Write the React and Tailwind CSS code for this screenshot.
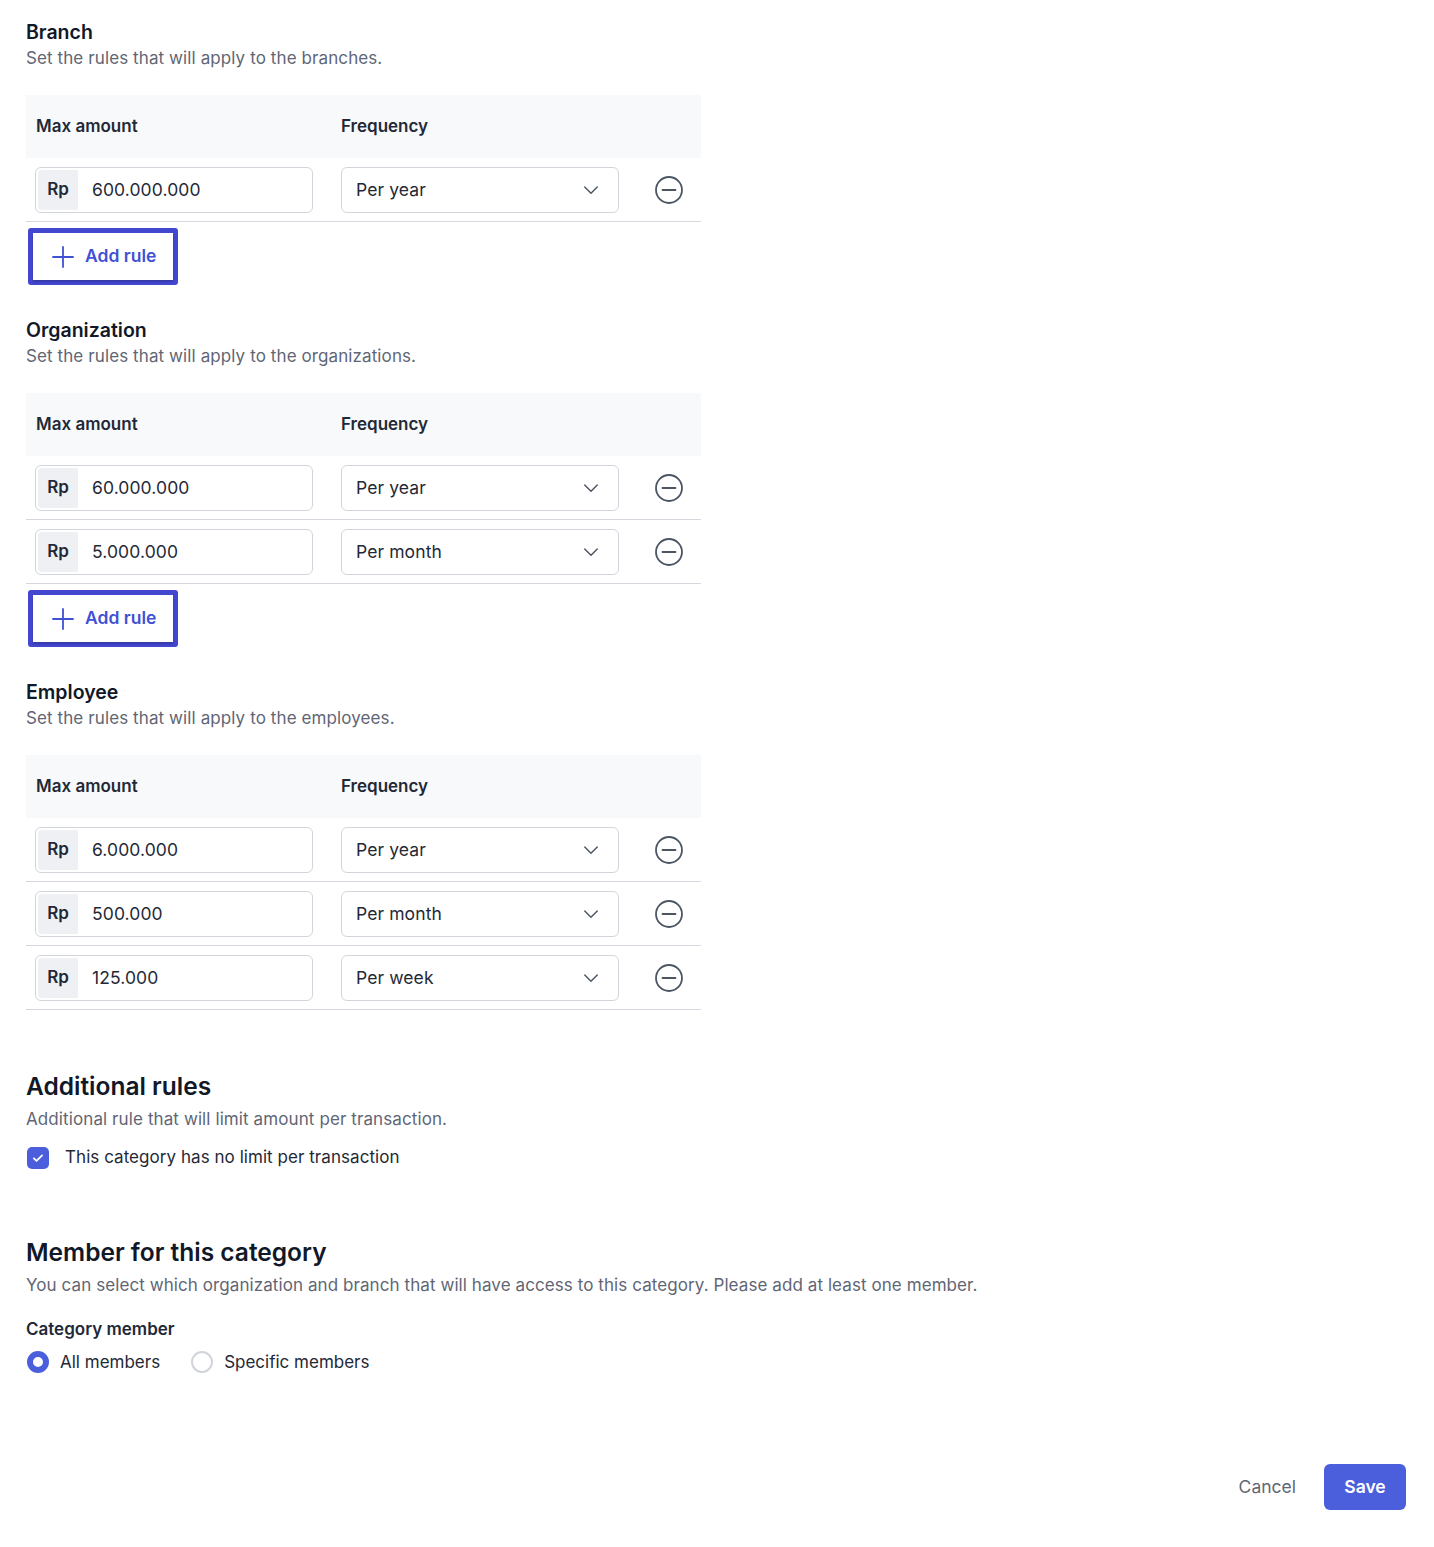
import React from 'react';

const sections = [
  {
    title: 'Branch',
    desc: 'Set the rules that will apply to the branches.',
    rows: [{ amount: '600.000.000', freq: 'Per year' }],
    addRule: true,
  },
  {
    title: 'Organization',
    desc: 'Set the rules that will apply to the organizations.',
    rows: [
      { amount: '60.000.000', freq: 'Per year' },
      { amount: '5.000.000', freq: 'Per month' },
    ],
    addRule: true,
  },
  {
    title: 'Employee',
    desc: 'Set the rules that will apply to the employees.',
    rows: [
      { amount: '6.000.000', freq: 'Per year' },
      { amount: '500.000', freq: 'Per month' },
      { amount: '125.000', freq: 'Per week' },
    ],
    addRule: false,
  },
];

const ChevronDown = () => (
  <svg width="20" height="20" viewBox="0 0 24 24" fill="none" stroke="#4b5563" strokeWidth="1.7" strokeLinecap="round" strokeLinejoin="round">
    <path d="M4.5 8.5l7.5 7.5 7.5-7.5" />
  </svg>
);

const MinusCircle = () => (
  <svg width="30" height="30" viewBox="0 0 30 30" fill="none" stroke="#4b5563" strokeWidth="1.8" strokeLinecap="round">
    <circle cx="15" cy="15" r="13" />
    <path d="M8.5 15h13" />
  </svg>
);

const PlusIcon = () => (
  <svg width="24" height="24" viewBox="0 0 24 24" fill="none" stroke="#3f51d4" strokeWidth="1.8" strokeLinecap="round">
    <path d="M12 2v20M2 12h20" />
  </svg>
);

const RuleRow = ({ amount, freq }) => (
  <div className="flex items-center h-[64px] border-b border-[#d5d8de] px-[9px] pt-[1px]">
    <div className="flex items-center w-[278px] h-[46px] border border-[#d1d5db] rounded-md p-[2px] bg-white">
      <div className="h-full w-[40px] bg-[#eef0f3] rounded-l-[4px] flex items-center justify-center text-[17px] font-semibold text-[#1f2937]">
        Rp
      </div>
      <span className="ml-[14px] text-[17.5px] text-[#1f2937] tracking-[0.1px]">{amount}</span>
    </div>
    <div className="ml-[28px] flex items-center justify-between w-[278px] h-[46px] border border-[#d1d5db] rounded-md pl-[14px] pr-[17px] bg-white">
      <span className="text-[17.5px] text-[#1f2937] tracking-[0.1px]">{freq}</span>
      <ChevronDown />
    </div>
    <div className="ml-[35px] flex items-center">
      <MinusCircle />
    </div>
  </div>
);

const AddRule = () => (
  <div className="inline-flex border-[5px] border-[#4347cf] rounded-[3px] mt-[6px] ml-[2px]">
    <button className="flex items-center gap-[10px] h-[47px] pl-[18px] pr-[17px] bg-white shadow-[0_2px_2px_rgba(0,0,0,0.2)] text-[17.5px] font-semibold text-[#3f51d4]">
      <PlusIcon />
      Add rule
    </button>
  </div>
);

const RuleSection = ({ title, desc, rows, addRule }) => (
  <div>
    <h2 className="text-[19.5px] font-semibold text-[#111827] leading-[26px]">{title}</h2>
    <p className="text-[17px] text-[#5f6675] leading-[26px] tracking-[0.1px]">{desc}</p>
    <div className="mt-[24px] w-[675px]">
      <div className="flex items-center h-[63px] bg-[#f8f9fa] px-[10px] pt-[1px] text-[17px] font-semibold text-[#1f2937]">
        <span className="w-[305px]">Max amount</span>
        <span>Frequency</span>
      </div>
      {rows.map((r, i) => (
        <RuleRow key={i} {...r} />
      ))}
    </div>
    {addRule && <AddRule />}
  </div>
);

export default function App() {
  return (
    <div className="min-h-[1547px] bg-white font-['Inter','Noto_Sans',sans-serif] px-[26px] pt-[19px] pb-[37px] flex flex-col">
      <div className="flex flex-col gap-[32px]">
        {sections.map((s) => (
          <RuleSection key={s.title} {...s} />
        ))}
      </div>

      <div className="mt-[60px]">
        <h2 className="text-[24.5px] font-semibold text-[#111827] leading-[32px]">Additional rules</h2>
        <p className="mt-[4px] text-[17px] text-[#5f6675] leading-[26px] tracking-[0.1px]">
          Additional rule that will limit amount per transaction.
        </p>
        <label className="mt-[13px] flex items-center">
          <span className="w-[22px] h-[22px] ml-[1px] rounded-[5px] bg-[#4b5fdc] flex items-center justify-center">
            <svg width="14" height="14" viewBox="0 0 24 24" fill="none" stroke="white" strokeWidth="3" strokeLinecap="round" strokeLinejoin="round">
              <path d="M5 12.5l4.5 4.5L19 7.5" />
            </svg>
          </span>
          <span className="ml-[16px] text-[17px] text-[#1f2937] tracking-[0.05px]">This category has no limit per transaction</span>
        </label>
      </div>

      <div className="mt-[65px]">
        <h2 className="text-[24.5px] font-semibold text-[#111827] leading-[32px]">Member for this category</h2>
        <p className="mt-[4px] text-[17px] text-[#5f6675] leading-[26px] tracking-[0.08px]">
          You can select which organization and branch that will have access to this category. Please add at least one member.
        </p>
        <div className="mt-[18px] text-[17px] font-semibold text-[#1f2937] leading-[26px]">Category member</div>
        <div className="mt-[8px] flex items-center">
          <label className="flex items-center">
            <span className="w-[22px] h-[22px] ml-[1px] rounded-full border-[6px] border-[#4b5fdc] bg-white" />
            <span className="ml-[11px] text-[17px] text-[#1f2937]">All members</span>
          </label>
          <label className="flex items-center ml-[31px]">
            <span className="w-[22px] h-[22px] rounded-full border-2 border-[#d1d5db] bg-white" />
            <span className="ml-[11px] text-[17px] text-[#1f2937]">Specific members</span>
          </label>
        </div>
      </div>

      <div className="mt-auto flex items-center justify-end gap-[28px] pr-[2px]">
        <button className="text-[17.5px] text-[#5f6675]">Cancel</button>
        <button className="w-[82px] h-[46px] rounded-md bg-[#4b5fdc] text-white text-[17.5px] font-semibold">Save</button>
      </div>
    </div>
  );
}
